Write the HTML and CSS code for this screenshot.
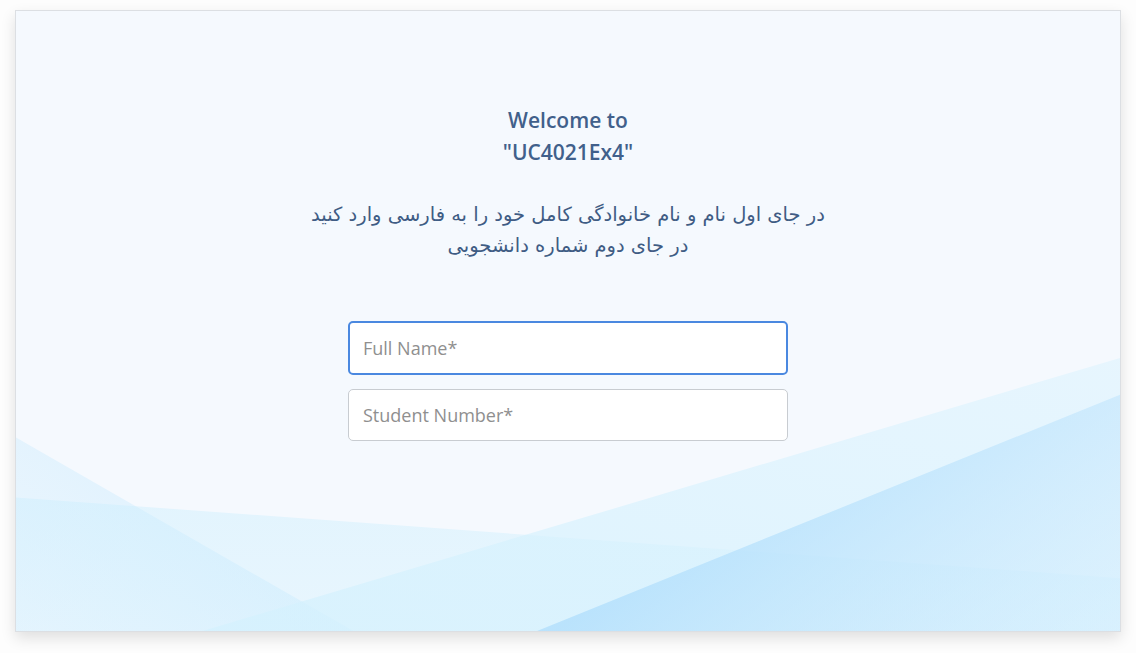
FILE: index.html
```html
<!DOCTYPE html>
<html lang="en">
<head>
<meta charset="utf-8">
<title>Welcome</title>
<link rel="stylesheet" href="styles.css">
</head>
<body>
<div class="card">
  <svg class="bg" viewBox="0 0 1106 622" preserveAspectRatio="none" aria-hidden="true">
    <defs>
      <linearGradient id="g1" x1="1" y1="0.2" x2="0" y2="1">
        <stop offset="0" stop-color="#c6e9fd" stop-opacity="0.6"/>
        <stop offset="1" stop-color="#c6e9fd" stop-opacity="0.15"/>
      </linearGradient>
      <linearGradient id="g2" x1="0" y1="0" x2="0" y2="1">
        <stop offset="0" stop-color="#cbeefd" stop-opacity="0.45"/>
        <stop offset="1" stop-color="#cbeefd" stop-opacity="0.3"/>
      </linearGradient>
      <linearGradient id="g3" x1="0" y1="1" x2="1" y2="0">
        <stop offset="0" stop-color="#d4f1fe" stop-opacity="0.75"/>
        <stop offset="1" stop-color="#d8f2fe" stop-opacity="0.5"/>
      </linearGradient>
      <linearGradient id="g4" x1="0.25" y1="0.6" x2="1" y2="1">
        <stop offset="0" stop-color="#b2dffc" stop-opacity="0.8"/>
        <stop offset="1" stop-color="#cbe9fd" stop-opacity="0.25"/>
      </linearGradient>
    </defs>
    <polygon points="0,428 338,622 0,622" fill="url(#g1)"/>
    <polygon points="0,488 1106,569 1106,622 0,622" fill="url(#g2)"/>
    <polygon points="187,622 1106,348 1106,622" fill="url(#g3)"/>
    <polygon points="522,622 1106,385 1106,622" fill="url(#g4)"/>
  </svg>
  <div class="content">
    <h1 class="title">Welcome to<br>"UC4021Ex4"</h1>
    <p class="intro" dir="rtl">در جای اول نام و نام خانوادگی کامل خود را به فارسی وارد کنید<br>در جای دوم شماره دانشجویی</p>
    <form class="form">
      <input class="field field-focus" type="text" placeholder="Full Name*" autofocus>
      <input class="field" type="text" placeholder="Student Number*">
    </form>
  </div>
</div>
</body>
</html>
```

FILE: styles.css
```css
html, body {
  margin: 0;
  padding: 0;
  background: #fdfdfd;
}
body {
  padding: 10px 15px 21px 15px;
  font-family: "Open Sans", "DejaVu Sans", sans-serif;
}
.card {
  position: relative;
  height: 620px;
  background: #f5f9fe;
  border: 1px solid #dcdfe3;
  box-shadow: 0 6px 14px rgba(0, 0, 0, 0.12);
  overflow: hidden;
}
.bg {
  position: absolute;
  left: 0;
  top: 0;
  width: 100%;
  height: 100%;
}
.content {
  position: relative;
  display: flex;
  flex-direction: column;
  align-items: center;
  padding-top: 93px;
}
.title {
  margin: 0;
  font-size: 21px;
  line-height: 32px;
  font-weight: 600;
  color: #41608b;
  text-align: center;
}
.intro {
  margin: 31px 0 0 0;
  font-family: "DejaVu Sans", "Noto Sans", sans-serif;
  font-size: 19.5px;
  line-height: 31px;
  color: #3f5c84;
  text-align: center;
}
.form {
  margin-top: 60px;
  display: flex;
  flex-direction: column;
  gap: 14px;
  width: 440px;
}
.field {
  box-sizing: border-box;
  width: 100%;
  height: 52px;
  padding: 0 14px;
  border: 1px solid #c8ccd1;
  border-radius: 5px;
  background: #fff;
  font-family: "Open Sans", sans-serif;
  font-size: 18px;
  color: #333;
  outline: none;
}
.field::placeholder {
  color: #8f8f8f;
}
.field-focus {
  height: 54px;
  border: 2px solid #4a88e0;
  padding: 0 13px;
}
```
